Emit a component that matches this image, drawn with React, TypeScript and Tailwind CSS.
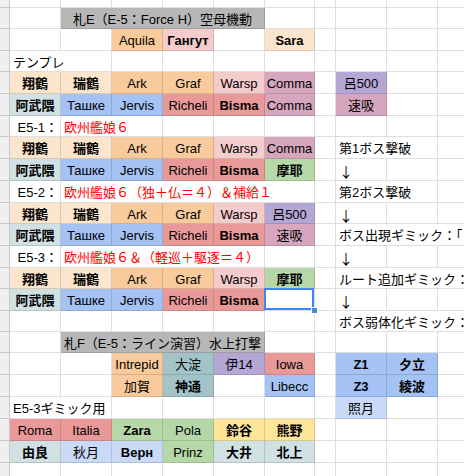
import React from "react";

type Cell = {
  s?: number; // column span
  t?: string;
  bg?: string;
  b?: boolean;
  red?: boolean;
  al?: "l" | "c" | "r";
  sel?: boolean;
};

// Google Sheets palette, written out so Tailwind picks them up.
const BG: Record<string, string> = {
  gray: "bg-[#b7b7b7]",
  lo3: "bg-[#fce5cd]",
  lo2: "bg-[#f9cb9c]",
  lr3: "bg-[#f4cccc]",
  lr2: "bg-[#ea9999]",
  mg: "bg-[#d5a6bd]",
  pu: "bg-[#b4a7d6]",
  bl: "bg-[#a4c2f4]",
  bl3: "bg-[#c9daf8]",
  cy3: "bg-[#d0e0e3]",
  cy2: "bg-[#a2c4c9]",
  gr: "bg-[#b6d7a8]",
  yl: "bg-[#ffe599]",
};

const SPAN: Record<number, string> = {
  1: "col-span-1",
  2: "col-span-2",
  3: "col-span-3",
  4: "col-span-4",
  5: "col-span-5",
};

const blank = (n: number): Cell[] => Array.from({ length: n }, () => ({}));

const fleet1 = (last: Cell): Cell[] => [
  { t: "翔鶴", bg: "lo3", b: true },
  { t: "瑞鶴", bg: "lo3", b: true },
  { t: "Ark", bg: "lo2" },
  { t: "Graf", bg: "lo2" },
  { t: "Warsp", bg: "lr3" },
  last,
];

const fleet2 = (last: Cell): Cell[] => [
  { t: "阿武隈", bg: "cy3", b: true },
  { t: "Ташке", bg: "bl" },
  { t: "Jervis", bg: "bl" },
  { t: "Richeli", bg: "lr2" },
  { t: "Bisma", bg: "lr2", b: true },
  last,
];

const rows: { h: string; cells: Cell[] }[] = [
  { h: "h-[8px]", cells: blank(10) },
  { h: "h-[21px]", cells: [{}, { s: 4, t: "札E（E-5：Force H）空母機動", bg: "gray" }, ...blank(5)] },
  {
    h: "h-[22px]",
    cells: [{}, {}, { t: "Aquila", bg: "lo2" }, { t: "Гангут", bg: "lr3", b: true }, {}, { t: "Sara", bg: "lo3", b: true }, ...blank(4)],
  },
  { h: "h-[21px]", cells: [{ s: 2, t: "テンプレ", al: "l" }, ...blank(8)] },
  { h: "h-[22px]", cells: [...fleet1({ t: "Comma", bg: "mg" }), {}, { t: "呂500", bg: "pu" }, {}, {}] },
  { h: "h-[22px]", cells: [...fleet2({ t: "Comma", bg: "mg" }), {}, { t: "速吸", bg: "mg" }, {}, {}] },
  { h: "h-[21px]", cells: [{ t: "E5-1：", al: "r" }, { s: 2, t: "欧州艦娘６", red: true, al: "l" }, ...blank(7)] },
  { h: "h-[22px]", cells: [...fleet1({ t: "Comma", bg: "mg" }), {}, { s: 2, t: "第1ボス撃破", al: "l" }, {}] },
  { h: "h-[22px]", cells: [...fleet2({ t: "摩耶", bg: "gr", b: true }), {}, { t: "↓", al: "l" }, {}, {}] },
  {
    h: "h-[22px]",
    cells: [{ t: "E5-2：", al: "r" }, { s: 5, t: "欧州艦娘６（独＋仏＝４）＆補給１", red: true, al: "l" }, {}, { s: 2, t: "第2ボス撃破", al: "l" }, {}],
  },
  { h: "h-[21px]", cells: [...fleet1({ t: "呂500", bg: "pu" }), {}, { t: "↓", al: "l" }, {}, {}] },
  { h: "h-[22px]", cells: [...fleet2({ t: "速吸", bg: "mg" }), {}, { s: 3, t: "ボス出現ギミック：「Ｐマス」", al: "l" }] },
  {
    h: "h-[22px]",
    cells: [{ t: "E5-3：", al: "r" }, { s: 4, t: "欧州艦娘６＆（軽巡＋駆逐＝４）", red: true, al: "l" }, {}, {}, { t: "↓", al: "l" }, {}, {}],
  },
  { h: "h-[21px]", cells: [...fleet1({ t: "摩耶", bg: "gr", b: true }), {}, { s: 3, t: "ルート追加ギミック：", al: "l" }] },
  { h: "h-[22px]", cells: [...fleet2({ sel: true }), {}, { t: "↓", al: "l" }, {}, {}] },
  { h: "h-[21px]", cells: [...blank(7), { s: 3, t: "ボス弱体化ギミック：", al: "l" }] },
  { h: "h-[21px]", cells: [{}, { s: 4, t: "札F（E-5：ライン演習）水上打撃", bg: "gray" }, ...blank(5)] },
  {
    h: "h-[22px]",
    cells: [
      {}, {},
      { t: "Intrepid", bg: "lo2" },
      { t: "大淀", bg: "cy2" },
      { t: "伊14", bg: "pu" },
      { t: "Iowa", bg: "lr2" },
      {},
      { t: "Z1", bg: "bl", b: true },
      { t: "夕立", bg: "bl", b: true },
      {},
    ],
  },
  {
    h: "h-[22px]",
    cells: [
      {}, {},
      { t: "加賀", bg: "lo2" },
      { t: "神通", bg: "cy2", b: true },
      {},
      { t: "Libecc", bg: "bl" },
      {},
      { t: "Z3", bg: "bl", b: true },
      { t: "綾波", bg: "bl", b: true },
      {},
    ],
  },
  { h: "h-[22px]", cells: [{ s: 2, t: "E5-3ギミック用", al: "l" }, ...blank(5), { t: "照月", bg: "bl3" }, {}, {}] },
  {
    h: "h-[22px]",
    cells: [
      { t: "Roma", bg: "lr2" },
      { t: "Italia", bg: "lr2" },
      { t: "Zara", bg: "gr", b: true },
      { t: "Pola", bg: "gr" },
      { t: "鈴谷", bg: "yl", b: true },
      { t: "熊野", bg: "yl", b: true },
      ...blank(4),
    ],
  },
  {
    h: "h-[22px]",
    cells: [
      { t: "由良", bg: "cy3", b: true },
      { t: "秋月", bg: "bl3" },
      { t: "Верн", bg: "bl3", b: true },
      { t: "Prinz", bg: "gr" },
      { t: "大井", bg: "cy3", b: true },
      { t: "北上", bg: "cy3", b: true },
      ...blank(4),
    ],
  },
  { h: "h-[22px]", cells: blank(10) },
];

function SheetCell({ c }: { c: Cell }) {
  const align = c.al === "l" ? "justify-start pl-[3px]" : c.al === "r" ? "justify-end pr-[2px]" : "justify-center";
  const arrow = c.t === "↓";
  return (
    <div
      className={`relative flex items-center min-w-0 border-r border-b border-black/[0.13] whitespace-nowrap ${SPAN[c.s ?? 1]} ${
        c.bg ? BG[c.bg] : ""
      } ${align} ${c.b ? "font-bold" : ""} ${c.red ? "text-[#ff0000]" : "text-black"}`}
    >
      {c.t && (
        <span className={arrow ? "pt-[3px] font-['Noto_Sans_CJK_JP',sans-serif] text-[14px]" : "pt-[2px]"}>{c.t}</span>
      )}
      {c.sel && (
        <>
          <div className="absolute -left-px -top-px right-0 bottom-0 border-2 border-[#4285f4] z-10" />
          <div className="absolute -right-[4px] -bottom-[4px] w-[7px] h-[7px] bg-[#4285f4] border border-white z-20" />
        </>
      )}
    </div>
  );
}

export default function App() {
  return (
    <div className="w-[464px] h-[476px] overflow-hidden bg-white font-['Liberation_Sans','Noto_Sans_CJK_JP',sans-serif] text-[13px] leading-none">
      {rows.map((row, i) => (
        <div key={i} className={`flex ${row.h}`}>
          <div className="w-[10px] shrink-0 bg-[#efefef] border-r border-b border-[#c9c9c9]" />
          <div className="grid grid-cols-[51px_51px_51px_51px_51px_50px_21px_51px_51px_60px] shrink-0">
            {row.cells.map((c, j) => (
              <SheetCell key={j} c={c} />
            ))}
          </div>
        </div>
      ))}
    </div>
  );
}
